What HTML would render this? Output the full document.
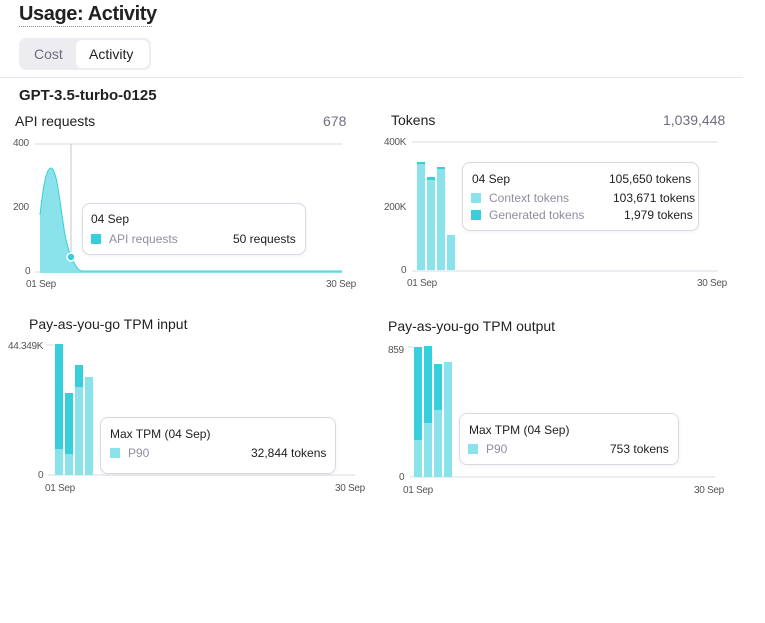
<!DOCTYPE html>
<html><head><style>
*{margin:0;padding:0;box-sizing:border-box}
body{width:765px;height:623px;background:#fff;font-family:"Liberation Sans",sans-serif;color:#202123;position:relative;overflow:hidden}
.a{position:absolute;white-space:nowrap}
.ax{font-size:10px;color:#555;letter-spacing:-0.3px}
.gl{position:absolute;height:2px;background:#ececf1}
.tt{position:absolute;background:#fff;border:1px solid #d9d9e3;border-radius:8px;box-shadow:0 1px 4px rgba(0,0,0,.06)}
.sq{position:absolute;width:10px;height:10px}
.lt{background:#8ae3ea}.dk{background:#36cfdb}
.b{position:absolute}
.t{font-size:12px}
.g{color:#8e8ea0}
</style></head><body>
<div class="a" style="left:19px;top:3px;font-size:20px;font-weight:600;letter-spacing:-0.4px">Usage: Activity</div>
<div class="a" style="left:19px;top:26px;width:133px;border-bottom:1px dotted #8e8ea0"></div>
<div class="a" style="left:19px;top:38px;width:132px;height:32px;background:#ececf1;border-radius:7px"></div>
<div class="a" style="left:76px;top:40px;width:73px;height:28px;background:#fff;border-radius:6px"></div>
<div class="a" style="left:34px;top:46px;font-size:14px;color:#6e6e80">Cost</div>
<div class="a" style="left:89px;top:46px;font-size:14px">Activity</div>
<div class="a" style="left:0;top:77px;width:743px;height:1px;background:#e5e5ea"></div>
<div class="a" style="left:19px;top:87px;font-size:15px;font-weight:bold">GPT-3.5-turbo-0125</div>

<div class="a" style="left:15px;top:113px;font-size:14px">API requests</div>
<div class="a" style="left:323px;top:113px;font-size:14px;color:#6e6e80">678</div>
<div class="gl" style="left:35px;top:143px;width:307px"></div>
<div class="gl" style="left:35px;top:271px;width:307px"></div>
<div class="a ax" style="left:13px;top:138px">400</div>
<div class="a ax" style="left:13px;top:202px">200</div>
<div class="a ax" style="left:25px;top:266px">0</div>
<svg class="a" style="left:0;top:0" width="360" height="300">
<line x1="71" y1="144" x2="71" y2="272" stroke="#c5c5d2" stroke-width="1"/>
<path d="M40 215 C43 188 46 168 51 168 C57 168 60 205 65 235 C68 250 72 260 76 266 C78 270 80 271 82 271 L342 271 L342 273 L40 273 Z" fill="#8ae3ea"/>
<path d="M40 215 C43 188 46 168 51 168 C57 168 60 205 65 235 C68 250 72 260 76 266 C78 270 80 271 82 271 L342 271" fill="none" stroke="#36cfdb" stroke-width="1"/>
<circle cx="71" cy="257" r="4" fill="#36cfdb" stroke="#fff" stroke-width="1.5"/>
</svg>
<div class="a ax" style="left:26px;top:279px">01 Sep</div>
<div class="a ax" style="left:326px;top:279px">30 Sep</div>
<div class="tt" style="left:82px;top:203px;width:224px;height:52px"></div>
<div class="a t" style="left:91px;top:212px">04 Sep</div>
<div class="sq dk" style="left:91px;top:234px"></div>
<div class="a t g" style="left:109px;top:232px">API requests</div>
<div class="a t" style="left:233px;top:232px">50 requests</div>

<div class="a" style="left:391px;top:112px;font-size:14px">Tokens</div>
<div class="a" style="left:663px;top:112px;font-size:14px;color:#6e6e80">1,039,448</div>
<div class="gl" style="left:412px;top:141px;width:306px"></div>
<div class="gl" style="left:412px;top:270px;width:306px"></div>
<div class="a ax" style="left:384px;top:137px">400K</div>
<div class="a ax" style="left:384px;top:202px">200K</div>
<div class="a ax" style="left:401px;top:265px">0</div>
<div class="b lt" style="left:417px;top:162px;width:8px;height:108px"></div><div class="b dk" style="left:417px;top:162px;width:8px;height:2px"></div>
<div class="b lt" style="left:427px;top:177px;width:8px;height:93px"></div><div class="b dk" style="left:427px;top:177px;width:8px;height:3px"></div>
<div class="b lt" style="left:437px;top:167px;width:8px;height:103px"></div><div class="b dk" style="left:437px;top:167px;width:8px;height:2px"></div>
<div class="b lt" style="left:447px;top:235px;width:8px;height:35px"></div>
<div class="a ax" style="left:407px;top:278px">01 Sep</div>
<div class="a ax" style="left:697px;top:278px">30 Sep</div>
<div class="tt" style="left:462px;top:162px;width:237px;height:69px"></div>
<div class="a t" style="left:472px;top:172px">04 Sep</div>
<div class="a t" style="left:609px;top:172px">105,650 tokens</div>
<div class="sq lt" style="left:471px;top:193px"></div>
<div class="a t g" style="left:489px;top:191px">Context tokens</div>
<div class="a t" style="left:613px;top:191px">103,671 tokens</div>
<div class="sq dk" style="left:471px;top:210px"></div>
<div class="a t g" style="left:489px;top:208px">Generated tokens</div>
<div class="a t" style="left:624px;top:208px">1,979 tokens</div>

<div class="a" style="left:29px;top:316px;font-size:14px">Pay-as-you-go TPM input</div>
<div class="gl" style="left:46px;top:344px;width:8px"></div>
<div class="gl" style="left:48px;top:474px;width:307px"></div>
<div class="a ax" style="left:8px;top:341px">44.349K</div>
<div class="a ax" style="left:38px;top:470px">0</div>
<div class="b lt" style="left:55px;top:344px;width:8px;height:131px"></div><div class="b dk" style="left:55px;top:344px;width:8px;height:105px"></div>
<div class="b lt" style="left:65px;top:393px;width:8px;height:82px"></div><div class="b dk" style="left:65px;top:393px;width:8px;height:61px"></div>
<div class="b lt" style="left:75px;top:365px;width:8px;height:110px"></div><div class="b dk" style="left:75px;top:365px;width:8px;height:22px"></div>
<div class="b lt" style="left:85px;top:377px;width:8px;height:98px"></div>
<div class="a ax" style="left:45px;top:483px">01 Sep</div>
<div class="a ax" style="left:335px;top:483px">30 Sep</div>
<div class="tt" style="left:100px;top:417px;width:236px;height:57px"></div>
<div class="a t" style="left:110px;top:427px">Max TPM (04 Sep)</div>
<div class="sq lt" style="left:110px;top:448px"></div>
<div class="a t g" style="left:128px;top:446px">P90</div>
<div class="a t" style="left:251px;top:446px">32,844 tokens</div>

<div class="a" style="left:388px;top:318px;font-size:14px">Pay-as-you-go TPM output</div>
<div class="gl" style="left:408px;top:346px;width:6px"></div>
<div class="gl" style="left:410px;top:476px;width:305px"></div>
<div class="a ax" style="left:388px;top:345px">859</div>
<div class="a ax" style="left:399px;top:472px">0</div>
<div class="b lt" style="left:414px;top:347px;width:8px;height:130px"></div><div class="b dk" style="left:414px;top:347px;width:8px;height:93px"></div>
<div class="b lt" style="left:424px;top:346px;width:8px;height:131px"></div><div class="b dk" style="left:424px;top:346px;width:8px;height:77px"></div>
<div class="b lt" style="left:434px;top:364px;width:8px;height:113px"></div><div class="b dk" style="left:434px;top:364px;width:8px;height:46px"></div>
<div class="b lt" style="left:444px;top:362px;width:8px;height:115px"></div>
<div class="a ax" style="left:403px;top:485px">01 Sep</div>
<div class="a ax" style="left:694px;top:485px">30 Sep</div>
<div class="tt" style="left:459px;top:413px;width:220px;height:52px"></div>
<div class="a t" style="left:469px;top:423px">Max TPM (04 Sep)</div>
<div class="sq lt" style="left:468px;top:444px"></div>
<div class="a t g" style="left:486px;top:442px">P90</div>
<div class="a t" style="left:610px;top:442px">753 tokens</div>
</body></html>
